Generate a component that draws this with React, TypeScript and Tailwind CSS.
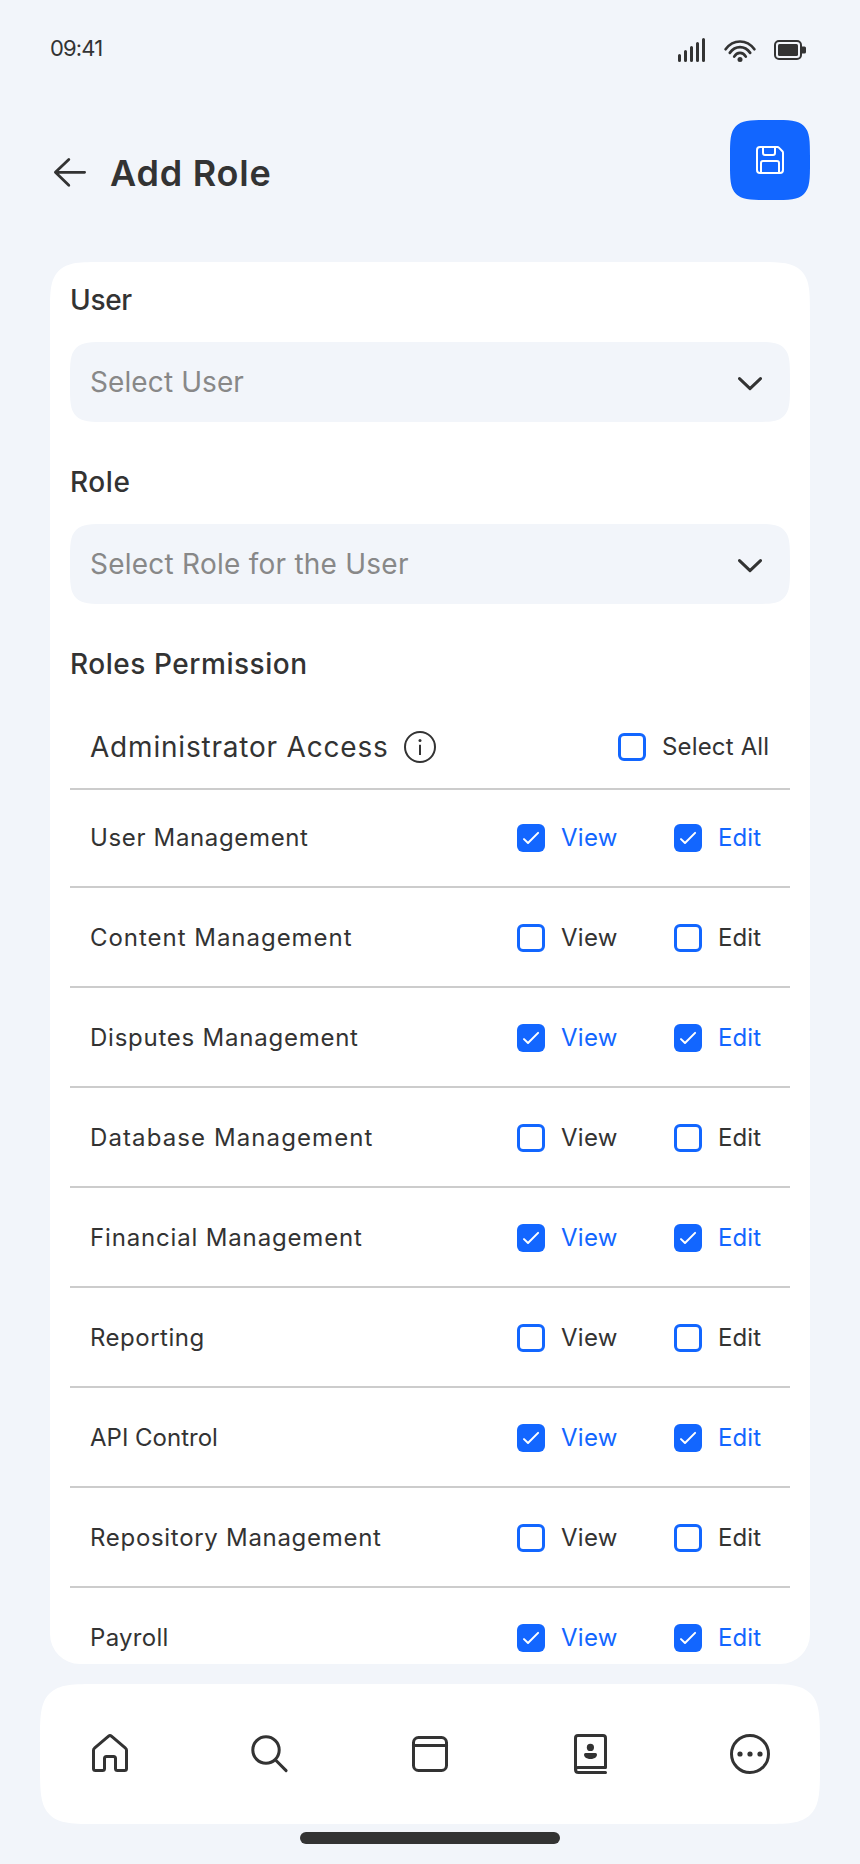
import React, { useState } from 'react';

type Permission = { name: string; tracking: string; enabled: boolean };

const permissions: Permission[] = [
  { name: 'User Management', tracking: 'tracking-[0.65px]', enabled: true },
  { name: 'Content Management', tracking: 'tracking-[0.97px]', enabled: false },
  { name: 'Disputes Management', tracking: 'tracking-[0.76px]', enabled: true },
  { name: 'Database Management', tracking: 'tracking-[1.1px]', enabled: false },
  { name: 'Financial Management', tracking: 'tracking-[0.84px]', enabled: true },
  { name: 'Reporting', tracking: 'tracking-[0.5px]', enabled: false },
  { name: 'API Control', tracking: 'tracking-[0px]', enabled: true },
  { name: 'Repository Management', tracking: 'tracking-[0.7px]', enabled: false },
  { name: 'Payroll', tracking: 'tracking-[0.3px]', enabled: true },
];

function StatusIcons() {
  return (
    <svg width="128" height="24" viewBox="0 0 128 24" fill="none" stroke="#333333">
      <g strokeWidth="3" strokeLinecap="round">
        <path d="M1.5 17.5v5M7.5 13.5v9M13.5 9.5v13M19.5 5.5v17M25.5 1.5v21" />
      </g>
      <g strokeWidth="2.7" strokeLinecap="round">
        <path d="M47.6 11.2C55.3 0.9 68.7 0.9 76.4 11.2" />
        <path d="M51.8 14.9C57.3 7.2 66.7 7.2 72.2 14.9" />
        <path d="M56.2 18.6C59.2 13.5 64.8 13.5 67.8 18.6" />
      </g>
      <circle cx="62" cy="21.4" r="2.5" fill="#333333" stroke="none" />
      <rect x="97" y="3" width="26" height="18" rx="4" strokeWidth="2" />
      <rect x="100" y="6" width="20" height="12" rx="1.5" fill="#333333" stroke="none" />
      <path d="M123.5 8.5h3a1.5 1.5 0 0 1 1.5 1.5v4a1.5 1.5 0 0 1-1.5 1.5h-3z" fill="#333333" stroke="none" />
    </svg>
  );
}

function Checkbox({ checked }: { checked: boolean }) {
  return (
    <span
      className={
        checked
          ? 'flex size-7 shrink-0 rounded-[6px] bg-[#1266ff]'
          : 'flex size-7 shrink-0 rounded-[6px] border-[3px] border-[#1266ff] bg-white'
      }
    >
      {checked && (
        <svg width="28" height="28" viewBox="0 0 28 28" fill="none" stroke="#fff" strokeWidth="2" strokeLinecap="round" strokeLinejoin="round">
          <path d="M7 15.1L11 19L21.1 8.9" />
        </svg>
      )}
    </span>
  );
}

function CheckOption({ label, initial, className }: { label: string; initial: boolean; className: string }) {
  const [checked, setChecked] = useState(initial);
  return (
    <button
      type="button"
      role="checkbox"
      aria-checked={checked}
      onClick={() => setChecked(!checked)}
      className={`flex shrink-0 items-center gap-4 whitespace-nowrap text-left text-[24px] leading-7 ${checked ? 'text-[#1266ff]' : ''} ${className}`}
    >
      <Checkbox checked={checked} />
      {label}
    </button>
  );
}

function SelectField({ label, placeholder, tracking, labelTracking }: { label: string; placeholder: string; tracking: string; labelTracking: string }) {
  return (
    <div className="mb-10 flex flex-col gap-[22px]">
      <span className={`text-[28px] font-medium leading-10 ${labelTracking}`}>{label}</span>
      <button
        type="button"
        className="flex h-20 items-center justify-between rounded-[38px] bg-[#f2f5fa] pl-5 pr-7 [corner-shape:squircle]"
      >
        <span className={`pb-px text-[28px] leading-10 text-[#888888] ${tracking}`}>{placeholder}</span>
        <svg width="24" height="14" viewBox="0 0 24 14" className="mt-[3px]" fill="none" stroke="#333333" strokeWidth="3" strokeLinecap="round" strokeLinejoin="round">
          <path d="M1.5 1.6L12 11.7L22.5 1.6" />
        </svg>
      </button>
    </div>
  );
}

function NavIcon({ label, children }: { label: string; children: React.ReactNode }) {
  return (
    <button type="button" aria-label={label}>
      <svg width="40" height="40" viewBox="0 0 40 40" fill="none" stroke="#333333" strokeWidth="3" strokeLinecap="round" strokeLinejoin="round">
        {children}
      </svg>
    </button>
  );
}

export default function App() {
  return (
    <div className="flex h-[1864px] w-[860px] flex-col bg-[#f2f5fa] font-['Inter','Noto_Sans',sans-serif] text-[#333333]">
      <div className="flex h-[100px] items-center justify-between pl-[50px] pr-[54px]">
        <span className="pb-1 text-[22px] leading-7 tracking-[-0.85px]">09:41</span>
        <StatusIcons />
      </div>

      <header className="flex h-[162px] items-start justify-between px-[50px] pt-5">
        <div className="flex items-center pt-[30px]">
          <svg width="40" height="40" viewBox="0 0 40 40" fill="none" stroke="#333333" strokeWidth="2.8" strokeLinecap="round" strokeLinejoin="round">
            <path d="M34.6 20.3H5.4M18.8 7.4L5.4 20.3L18.8 33.2" />
          </svg>
          <h1 className="ml-5 pt-[3px] text-[36px] font-semibold leading-10 tracking-[0.77px]">Add Role</h1>
        </div>
        <button
          type="button"
          aria-label="Save"
          className="flex size-20 items-center justify-center rounded-[38px] bg-[#1266ff] [corner-shape:squircle]"
        >
          <svg width="28" height="28" viewBox="0 0 28 28" fill="none" stroke="#fff" strokeWidth="2" strokeLinecap="round" strokeLinejoin="round">
            <path d="M4 1H21.4Q22.3 1 22.9 1.6L26.4 5.2Q27 5.8 27 6.7V24Q27 27 24 27H4Q1 27 1 24V4Q1 1 4 1Z" />
            <path d="M7 1V7Q7 9 9 9H17Q19 9 19 7V1" />
            <path d="M5 27V17Q5 15 7 15H21Q23 15 23 17V27" />
          </svg>
        </button>
      </header>

      <main className="mx-[50px] h-[1402px] overflow-hidden rounded-t-[52px] rounded-b-[30px] bg-white px-5 pt-[18px] [corner-shape:superellipse(1.9)_superellipse(1.9)_round_round]">
        <SelectField label="User" placeholder="Select User" labelTracking="tracking-[-0.3px]" tracking="tracking-[0.1px]" />
        <SelectField label="Role" placeholder="Select Role for the User" labelTracking="tracking-[0.6px]" tracking="tracking-[0.24px]" />
        <h2 className="text-[28px] font-medium leading-10 tracking-[0.54px]">Roles Permission</h2>

        <div className="mt-[22px] flex h-[84px] items-center border-b-2 border-[#cccccc] px-5">
          <span className="w-[298px] whitespace-nowrap text-[28px] leading-10 tracking-[0.8px]">Administrator Access</span>
          <svg width="32" height="32" viewBox="0 0 32 32" className="ml-4" fill="none" stroke="#333333" strokeWidth="2">
            <circle cx="16" cy="16" r="15" />
            <path d="M16 13.8V24" />
            <circle cx="16" cy="9.6" r="1.5" fill="#333333" stroke="none" />
          </svg>
          <CheckOption label="Select All" initial={false} className="ml-auto w-[152px] tracking-[0.16px]" />
        </div>

        {permissions.map((p, i) => (
          <div
            key={p.name}
            className={`flex items-center border-b-2 border-[#cccccc] px-5 ${i === 0 ? 'h-[98px]' : 'h-[100px] pt-[2px]'}`}
          >
            <span className={`flex-1 text-[24px] leading-7 ${p.tracking}`}>{p.name}</span>
            <CheckOption label="View" initial={p.enabled} className="w-[157px] tracking-[0.3px]" />
            <CheckOption label="Edit" initial={p.enabled} className="w-[96px] tracking-[0.1px]" />
          </div>
        ))}
      </main>

      <nav className="mx-10 mt-5 flex h-[140px] items-center justify-between rounded-[60px] bg-white px-[50px] [corner-shape:squircle]">
        <NavIcon label="Home">
          <path d="M3.5 16.2Q3.5 15 4.5 14.2L18.6 2.2Q20 1 21.4 2.2L35.5 14.2Q36.5 15 36.5 16.2V34.5Q36.5 36.5 34.5 36.5H27.5Q25.5 36.5 25.5 34.5V24.5Q25.5 22.5 23.5 22.5H16.5Q14.5 22.5 14.5 24.5V34.5Q14.5 36.5 12.5 36.5H5.5Q3.5 36.5 3.5 34.5Z" />
        </NavIcon>
        <NavIcon label="Search">
          <circle cx="16" cy="16" r="13.2" />
          <path d="M25.8 26.2L36.1 36.6" />
        </NavIcon>
        <NavIcon label="Calendar">
          <rect x="3.5" y="3.5" width="33" height="33" rx="5" />
          <path d="M3.5 11.5H36.5" />
        </NavIcon>
        <NavIcon label="Contacts">
          <path d="M35.5 33.5V4Q35.5 1.5 33 1.5H8Q5.5 1.5 5.5 4V35.5Q5.5 38.5 8.5 38.5H35.5M5.5 36Q5.5 33.5 8 33.5H35.5" />
          <circle cx="20.4" cy="13.4" r="3.6" fill="#333333" stroke="none" />
          <path d="M15.5 19H25.5Q27 19 27 20.5C27 23.5 23.8 25 20.5 25S14 23.5 14 20.5Q14 19 15.5 19Z" fill="#333333" stroke="none" />
        </NavIcon>
        <NavIcon label="More">
          <circle cx="20" cy="20" r="18.5" />
          <g fill="#333333" stroke="none">
            <circle cx="10" cy="20" r="2.6" />
            <circle cx="20" cy="20" r="2.6" />
            <circle cx="30" cy="20" r="2.6" />
          </g>
        </NavIcon>
      </nav>

      <div className="mx-auto mt-2 h-3 w-[260px] rounded-[6px] bg-[#333333]" />
    </div>
  );
}
